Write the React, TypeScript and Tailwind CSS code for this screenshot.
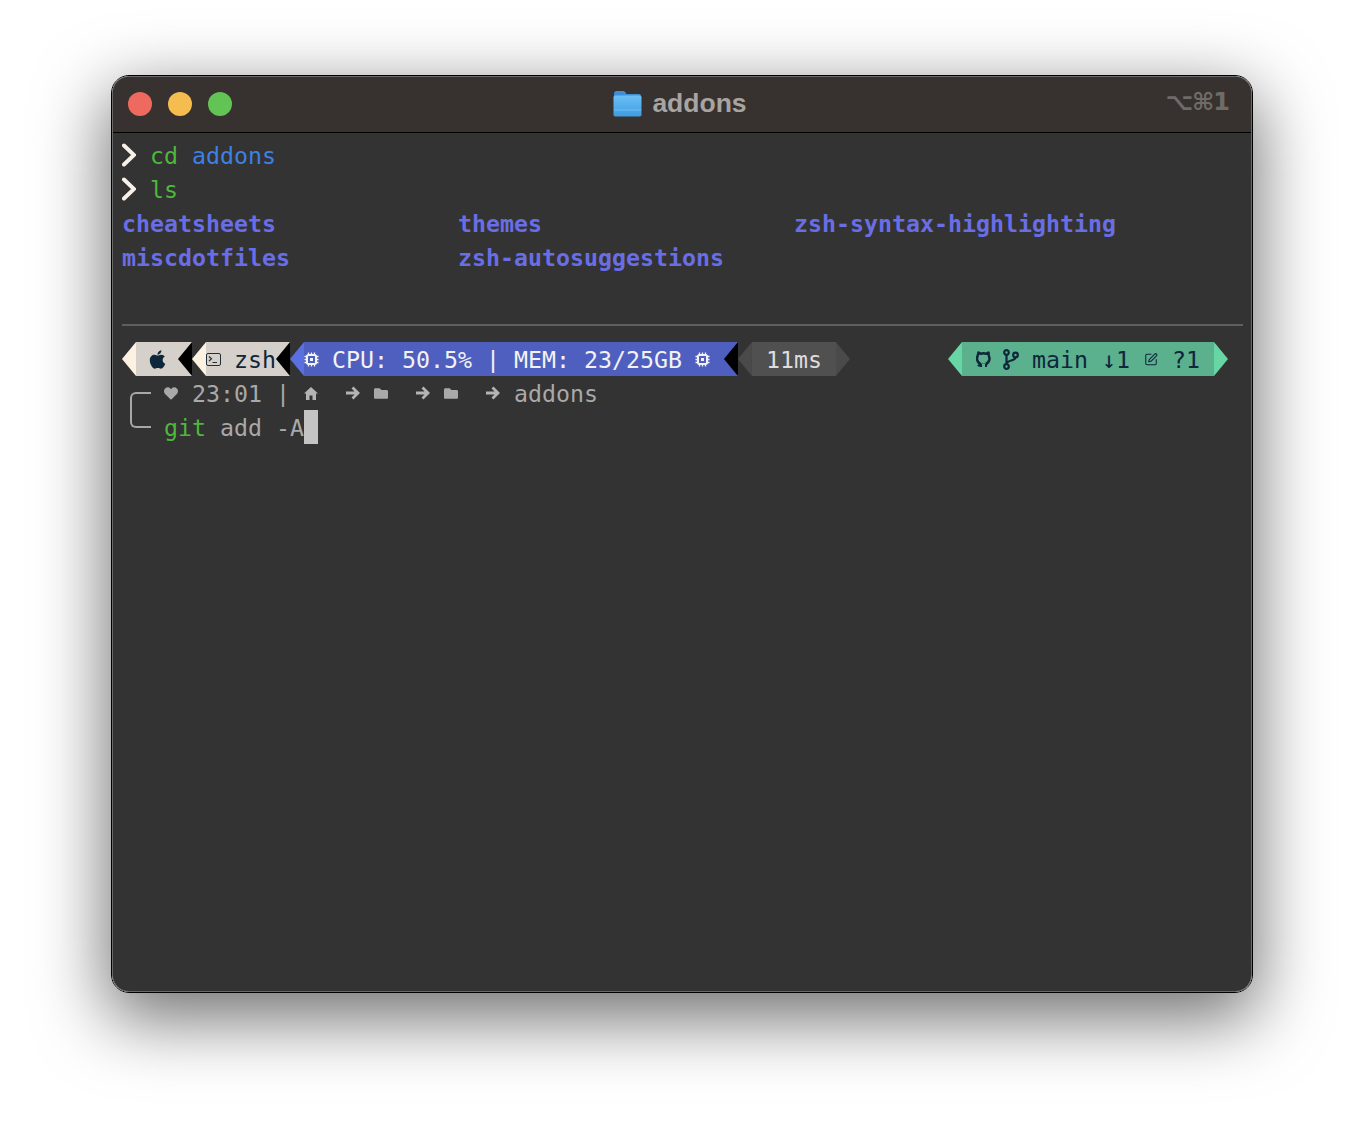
import { FaApple, FaFolder, FaHeart } from 'react-icons/fa'
import { SquarePen } from 'lucide-react'

const leftCap = 'w-[14px] h-full [clip-path:polygon(100%_0,100%_100%,0_50%)]'
const rightCap = 'w-[14px] h-full [clip-path:polygon(0_0,100%_50%,0_100%)]'

function Prompt() {
  return (
    <svg width="14" height="34" viewBox="0 0 14 34" className="shrink-0">
      <path d="M2 7.500 L12 17 L2 26.500" fill="none" stroke="#f7f1e8" strokeWidth="4" strokeLinecap="round" />
    </svg>
  )
}

function Notch() {
  return <div className={`${leftCap} bg-black`} />
}

function Chip() {
  return (
    <svg width="15" height="15" viewBox="0 0 15 15" className="shrink-0">
      <path d="M4.500 0.500v2.500M7.500 0.500v2.500M10.500 0.500v2.500M4.500 12v2.500M7.500 12v2.500M10.500 12v2.500M0.500 4.500h2.500M0.500 7.500h2.500M0.500 10.500h2.500M12 4.500h2.500M12 7.500h2.500M12 10.500h2.500" stroke="#f2f2f2" strokeWidth="1.300" />
      <rect x="3" y="3" width="9" height="9" rx="1.500" fill="none" stroke="#f2f2f2" strokeWidth="2" />
      <rect x="6" y="6" width="3" height="3" fill="#f2f2f2" />
    </svg>
  )
}

function TerminalIcon() {
  return (
    <svg width="15" height="13" viewBox="0 0 15 13" className="shrink-0">
      <rect x="0.500" y="0.500" width="14" height="12" rx="1.500" fill="none" stroke="#22303c" strokeWidth="1" />
      <path d="M3 3.500l2.500 2.300L3 8.100M6.500 9.500H11" fill="none" stroke="#22303c" strokeWidth="1.200" />
    </svg>
  )
}

function GithubIcon() {
  return (
    <svg width="15" height="17" viewBox="0 0 15 17" className="shrink-0">
      <path d="M2.500 1.500l2.300 1.300a7 7 0 0 1 5.400 0l2.300-1.300.3 3.200a6.200 6.200 0 1 1-11.100 0z" fill="none" stroke="#10263a" strokeWidth="2.500" strokeLinejoin="round" />
      <path d="M5 14.500c-1.200.6-2.400.3-3-.8" fill="none" stroke="#10263a" strokeWidth="1.800" />
      <path d="M5 12.500h5v3.500H5z" fill="#5bb08d" />
      <path d="M5 13v3M10 13v3" stroke="#10263a" strokeWidth="2" />
    </svg>
  )
}

function BranchIcon() {
  return (
    <svg width="16" height="21" viewBox="0 0 16 21" className="shrink-0">
      <circle cx="3.500" cy="3.500" r="2.300" fill="none" stroke="#10263a" strokeWidth="2.200" />
      <circle cx="3.500" cy="17.500" r="2.300" fill="none" stroke="#10263a" strokeWidth="2.200" />
      <circle cx="12.500" cy="6" r="2.300" fill="none" stroke="#10263a" strokeWidth="2.200" />
      <path d="M3.500 6v9M12.500 8.500c0 3.500-9 2.500-9 6.500" fill="none" stroke="#10263a" strokeWidth="2.200" />
    </svg>
  )
}

function HomeIcon() {
  return (
    <svg width="14" height="13" viewBox="0 0 14 13" className="shrink-0" fill="#b4b4b4">
      <path d="M7 0L14 6.500H12V13H8.500V8.500H5.500V13H2V6.500H0z" />
    </svg>
  )
}

function ArrowIcon() {
  return (
    <svg width="15" height="14" viewBox="0 0 15 14" className="shrink-0">
      <path d="M1 7H13M7.500 1.500L13 7L7.500 12.500" fill="none" stroke="#b4b4b4" strokeWidth="2.800" />
    </svg>
  )
}

function Title() {
  return (
    <div className="h-[56px] flex-none border-b border-black bg-[#37322f] grid grid-cols-[1fr_auto_1fr] items-center">
      <div className="flex gap-4 pl-[15px] pb-[1px]">
        <div className="w-6 h-6 rounded-full bg-[#ee6a5f]" />
        <div className="w-6 h-6 rounded-full bg-[#f5bd4f]" />
        <div className="w-6 h-6 rounded-full bg-[#61c454]" />
      </div>
      <div className="flex items-center gap-[10px] mr-[4px] pb-[3px]">
        <svg width="29" height="27" viewBox="0 0 29 27">
          <defs>
            <linearGradient id="folderFront" x1="0" y1="0" x2="0" y2="1">
              <stop offset="0" stopColor="#6cc0f5" />
              <stop offset="1" stopColor="#3f9be0" />
            </linearGradient>
          </defs>
          <path d="M1 3.500C1 2 2 1 3.500 1h6.500c1.200 0 1.800 .5 2.500 1.500l1 1.500H26c1.200 0 2 .8 2 2v2H1z" fill="#3a8fd6" />
          <rect x="0.500" y="5.500" width="28" height="21" rx="1.800" fill="url(#folderFront)" />
          <path d="M1 20h27" stroke="#7cc6f2" strokeWidth="0.800" />
        </svg>
        <span className="font-['Liberation_Sans',sans-serif] font-bold text-[26.500px] leading-none text-[#a8a4a1]">addons</span>
      </div>
      <div className="justify-self-end pr-[22px] pb-[5px] font-['DejaVu_Sans',sans-serif] font-bold text-[24px] leading-none text-[#6f6b68] tracking-[-1px]">
        ⌥⌘1
      </div>
    </div>
  )
}

function StatusLine() {
  return (
    <div className="h-[34px] flex justify-between pr-[21px] whitespace-pre">
      <div className="flex h-full">
        <div className={`${leftCap} bg-[#fdf1e1]`} />
        <div className="flex items-center h-full bg-[#d5d0c9] text-[#10263a]">
          <div className="w-[42px] flex justify-center"><FaApple size={21} /></div>
          <Notch />
        </div>
        <div className={`${leftCap} bg-[#fdf1e1]`} />
        <div className="flex items-center h-full bg-[#d5d0c9] text-[#10263a]">
          <div className="w-[14px] flex justify-center"><TerminalIcon /></div>
          <span className="pt-[2px]">{' zsh'}</span>
          <Notch />
        </div>
        <div className={`${leftCap} bg-[#5a70e0]`} />
        <div className="flex items-center h-full bg-[#4f5fbf] text-[#f2f2f2]">
          <div className="w-[14px] flex justify-center"><Chip /></div>
          <span className="pt-[2px]">{' CPU: 50.5% | MEM: 23/25GB '}</span>
          <div className="w-[14px] flex justify-center"><Chip /></div>
          <span>{' '}</span>
          <Notch />
        </div>
        <div className={`${leftCap} bg-[#4a4a4a]`} />
        <div className="flex items-center h-full bg-[#505050] text-[#dddddd]">
          <span className="pt-[2px]">{' 11ms '}</span>
        </div>
        <div className={`${rightCap} bg-[#4a4a4a]`} />
      </div>
      <div className="flex h-full">
        <div className={`${leftCap} bg-[#68d5a5]`} />
        <div className="flex items-center h-full bg-[#5bb08d] text-[#10263a]">
          <span>{' '}</span>
          <div className="w-[14px] flex justify-center"><GithubIcon /></div>
          <span>{' '}</span>
          <div className="w-[14px] flex justify-center"><BranchIcon /></div>
          <span className="pt-[2px]">{' main ↓1 '}</span>
          <div className="w-[14px] flex justify-center"><SquarePen size={15} strokeWidth={1.800} /></div>
          <span className="pt-[2px]">{' ?1 '}</span>
        </div>
        <div className={`${rightCap} bg-[#68d5a5]`} />
      </div>
    </div>
  )
}

function PathLine() {
  return (
    <div className="flex">
      <div className="w-[42px] flex items-center justify-end pr-[13px]">
        <div className="w-[21px] h-[36px] border-y-2 border-l-2 border-[#a8a8a8] rounded-l-[6px]" />
      </div>
      <div>
        <div className="h-[34px] flex items-center whitespace-pre text-[#a9a9a9]">
          <div className="w-[14px] flex justify-center"><FaHeart size={15} /></div>
          <span className="pt-[2px]">{' 23:01 | '}</span>
          <div className="w-[14px] flex justify-center"><HomeIcon /></div>
          <span className="w-[28px]" />
          <div className="w-[14px] flex justify-center"><ArrowIcon /></div>
          <span className="w-[14px]" />
          <div className="w-[14px] flex justify-center"><FaFolder size={15} /></div>
          <span className="w-[28px]" />
          <div className="w-[14px] flex justify-center"><ArrowIcon /></div>
          <span className="w-[14px]" />
          <div className="w-[14px] flex justify-center"><FaFolder size={15} /></div>
          <span className="w-[28px]" />
          <div className="w-[14px] flex justify-center"><ArrowIcon /></div>
          <span className="pt-[2px]">{' addons'}</span>
        </div>
        <div className="h-[34px] flex items-center whitespace-pre text-[#a9a9a9]">
          <span className="pt-[2px] text-[#4eb83c]">git</span>
          <span className="pt-[2px]">{' add -A'}</span>
          <div className="w-[14px] h-[34px] bg-[#c4c4c4]" />
        </div>
      </div>
    </div>
  )
}

export default function App() {
  return (
    <div className="min-h-[1140px] bg-white pt-[75px] px-[111px]">
      <div className="h-[918px] rounded-[18px] border border-black shadow-[0_22px_70px_4px_rgba(0,0,0,0.56)]">
        <div className="h-full rounded-[17px] border border-[#6a6a6a] overflow-hidden bg-[#333333] flex flex-col">
          <Title />
          <div className="pt-[5px] pl-[9px] pr-[2px] font-['DejaVu_Sans_Mono',monospace] text-[23.250px] leading-[36px]">
            <div className="h-[34px] flex whitespace-pre">
              <Prompt />
              <span className="text-[#4eb83c]">{' cd'}</span>
              <span className="text-[#3d80e8]">{' addons'}</span>
            </div>
            <div className="h-[34px] flex whitespace-pre">
              <Prompt />
              <span className="text-[#4eb83c]">{' ls'}</span>
            </div>
            <div className="grid grid-cols-[336px_336px_1fr] auto-rows-[34px] font-bold text-[#696ee6]">
              <div>cheatsheets</div>
              <div>themes</div>
              <div>zsh-syntax-highlighting</div>
              <div>miscdotfiles</div>
              <div>zsh-autosuggestions</div>
            </div>
            <div className="h-[68px] flex flex-col justify-end pb-[16px] pr-[6px]">
              <div className="h-[2px] bg-[#5f5f5f]" />
            </div>
            <StatusLine />
            <PathLine />
          </div>
        </div>
      </div>
    </div>
  )
}
